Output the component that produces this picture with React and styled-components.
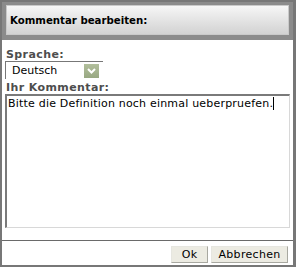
import React from "react";
import styled, { createGlobalStyle } from "styled-components";

const Global = createGlobalStyle`
  html, body { margin: 0; padding: 0; background: #ffffff; }
  * { box-sizing: border-box; }
`;

const Dialog = styled.div`
  width: 296px;
  height: 267px;
  border: 2px solid #777777;
  border-right-width: 3px;
  display: flex;
  flex-direction: column;
  font-family: "DejaVu Sans", Verdana, sans-serif;
  font-size: 11px;
  color: #000;
  background: #fff;
`;

const Header = styled.div`
  background: #8b8b8b;
  padding: 3px 4px 5px 4px;
`;

const HeaderInner = styled.div`
  height: 30px;
  border: 1px solid #c9c9c9;
  background: linear-gradient(#f6f6f6, #d2d2d2);
  display: flex;
  align-items: center;
  padding-left: 3px;
`;

const Title = styled.h1`
  margin: 0;
  font-size: 10.2px;
  font-weight: bold;
  color: #000;
`;

const Body = styled.div`
  flex: 1;
  padding: 9px 3px 0 3px;
  display: flex;
  flex-direction: column;
`;

const Label = styled.div`
  font-weight: bold;
  color: #4d4d4d;
  letter-spacing: 0.4px;
  line-height: 12px;
  padding-left: 1px;
`;

const SelectBox = styled.div`
  width: 98px;
  height: 18px;
  margin-bottom: 3px;
  border-top: 1px solid #777;
  border-left: 1px solid #777;
  display: flex;
  align-items: center;
  justify-content: space-between;
  padding: 0 4px 0 6px;
`;

const ArrowBtn = styled.span`
  width: 15px;
  height: 14px;
  background: linear-gradient(#b2bf9c, #98a882);
  display: flex;
  align-items: center;
  justify-content: center;
`;

const CommentArea = styled.div`
  height: 134px;
  border-top: 2px solid #7a7a7a;
  border-left: 2px solid #7a7a7a;
  border-right: 1px solid #d8d8d8;
  border-bottom: 1px solid #d8d8d8;
  padding: 1px 1px;
  line-height: 13px;
  letter-spacing: 0.2px;
`;

const Caret = styled.span`
  display: inline-block;
  width: 1px;
  height: 13px;
  background: #000;
  vertical-align: -3px;
`;

const Footer = styled.div`
  border-top: 1px solid #6a6a6a;
  height: 25px;
  display: flex;
  justify-content: flex-end;
  align-items: flex-start;
  gap: 3px;
  padding: 5px 5px 0 0;
`;

const Button = styled.button`
  height: 17px;
  width: ${(p) => p.$w}px;
  padding: 0;
  font-family: "DejaVu Sans", Verdana, sans-serif;
  font-size: 11px;
  color: #000;
  background: #ecebe2;
  border: 1px solid;
  border-color: #e6e6e0 #a8a8a0 #a8a8a0 #e6e6e0;
  letter-spacing: 0.3px;
`;

export default function App() {
  return (
    <>
      <Global />
      <Dialog>
        <Header>
          <HeaderInner>
            <Title>Kommentar bearbeiten:</Title>
          </HeaderInner>
        </Header>
        <Body>
          <Label>Sprache:</Label>
          <SelectBox>
            <span>Deutsch</span>
            <ArrowBtn>
              <svg width="9" height="6" viewBox="0 0 9 6">
                <polyline points="1,1 4.5,4.5 8,1" fill="none" stroke="#fff" strokeWidth="2" />
              </svg>
            </ArrowBtn>
          </SelectBox>
          <Label>Ihr Kommentar:</Label>
          <CommentArea>
            Bitte die Definition noch einmal ueberpruefen.<Caret />
          </CommentArea>
        </Body>
        <Footer>
          <Button $w={37}>Ok</Button>
          <Button $w={77}>Abbrechen</Button>
        </Footer>
      </Dialog>
    </>
  );
}
